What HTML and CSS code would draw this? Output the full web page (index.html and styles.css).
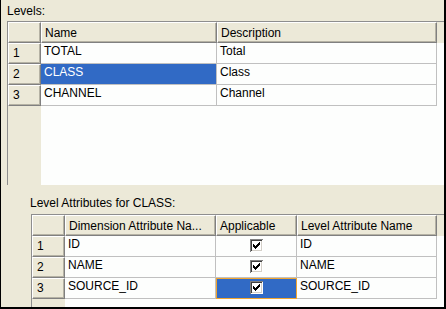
FILE: index.html
```html
<!DOCTYPE html>
<html lang="en">
<head>
    <meta charset="UTF-8">
    <title>Levels</title>
    <link rel="stylesheet" href="styles.css">
</head>
<body>

    <div class="frame">
        <div class="caption">Levels:</div>

        <div class="pane pane-levels">
            <div class="row levels head">
                <div class="hcell corner"></div>
                <div class="hcell">Name</div>
                <div class="hcell">Description</div>
                <div class="filler"></div>
            </div>
            <div class="row levels">
                <div class="rhead">1</div>
                <div class="cell">TOTAL</div>
                <div class="cell">Total</div>
            </div>
            <div class="row levels">
                <div class="rhead">2</div>
                <div class="cell selected">CLASS</div>
                <div class="cell">Class</div>
            </div>
            <div class="row levels">
                <div class="rhead">3</div>
                <div class="cell">CHANNEL</div>
                <div class="cell">Channel</div>
            </div>
        </div>

        <div class="caption caption-attrs">Level Attributes for CLASS:</div>

        <div class="pane pane-attrs">
            <div class="row attrs head">
                <div class="hcell corner"></div>
                <div class="hcell">Dimension Attribute Na...</div>
                <div class="hcell">Applicable</div>
                <div class="hcell">Level Attribute Name</div>
                <div class="filler"></div>
            </div>
            <div class="row attrs">
                <div class="rhead">1</div>
                <div class="cell">ID</div>
                <div class="cell check">
                    <svg class="box" width="13" height="13" viewBox="0 0 13 13" shape-rendering="crispEdges">
                        <rect width="13" height="13" fill="#fff"/>
                        <path d="M0.5 12.5V0.5H12.5" stroke="#808080" fill="none"/>
                        <path d="M1.5 11.5V1.5H11.5" stroke="#404040" fill="none"/>
                        <path d="M1.5 11.5H11.5V1.5" stroke="#d4d0c8" fill="none"/>
                        <path d="M3 5h1v3h-1zM4 6h1v3h-1zM5 7h1v3h-1zM6 6h1v3h-1zM7 5h1v3h-1zM8 4h1v3h-1zM9 3h1v3h-1z" fill="#000"/>
                    </svg>
                </div>
                <div class="cell">ID</div>
            </div>
            <div class="row attrs">
                <div class="rhead">2</div>
                <div class="cell">NAME</div>
                <div class="cell check">
                    <svg class="box" width="13" height="13" viewBox="0 0 13 13" shape-rendering="crispEdges">
                        <rect width="13" height="13" fill="#fff"/>
                        <path d="M0.5 12.5V0.5H12.5" stroke="#808080" fill="none"/>
                        <path d="M1.5 11.5V1.5H11.5" stroke="#404040" fill="none"/>
                        <path d="M1.5 11.5H11.5V1.5" stroke="#d4d0c8" fill="none"/>
                        <path d="M3 5h1v3h-1zM4 6h1v3h-1zM5 7h1v3h-1zM6 6h1v3h-1zM7 5h1v3h-1zM8 4h1v3h-1zM9 3h1v3h-1z" fill="#000"/>
                    </svg>
                </div>
                <div class="cell">NAME</div>
            </div>
            <div class="row attrs">
                <div class="rhead">3</div>
                <div class="cell">SOURCE_ID</div>
                <div class="cell check selected focus">
                    <svg class="box" width="13" height="13" viewBox="0 0 13 13" shape-rendering="crispEdges">
                        <rect width="13" height="13" fill="#fff"/>
                        <path d="M0.5 12.5V0.5H12.5" stroke="#808080" fill="none"/>
                        <path d="M1.5 11.5V1.5H11.5" stroke="#404040" fill="none"/>
                        <path d="M1.5 11.5H11.5V1.5" stroke="#d4d0c8" fill="none"/>
                        <path d="M3 5h1v3h-1zM4 6h1v3h-1zM5 7h1v3h-1zM6 6h1v3h-1zM7 5h1v3h-1zM8 4h1v3h-1zM9 3h1v3h-1z" fill="#000"/>
                    </svg>
                </div>
                <div class="cell">SOURCE_ID</div>
            </div>
        </div>
    </div>

</body>
</html>
```

FILE: styles.css
```css
body {
    margin: 0;
    font-family: "Liberation Sans", Arial, sans-serif;
    font-size: 12px;
    color: #000;
    background-color: #ece9d8;
}

.frame {
    width: 446px;
    height: 309px;
    box-sizing: border-box;
    border-left: 1px solid #000;
    border-right: 2px solid #000;
    border-bottom: 2px solid #000;
    background-color: #ece9d8;
    display: flex;
    flex-direction: column;
}

.caption {
    padding: 4px 0 3px 6px;
    line-height: 14px;
}

.caption-attrs {
    padding: 11px 0 4px 29px;
}

.pane {
    margin-left: 6px;
    border-top: 1px solid #8e8e8e;
    border-left: 1px solid #8e8e8e;
    background: linear-gradient(to right, #ece9d8 33px, #fdfefd 33px);
}

.pane-levels {
    height: 163px;
}

.pane-attrs {
    margin-left: 30px;
    flex: 1;
}

.row {
    display: grid;
    height: 21px;
}

.levels {
    grid-template-columns: 33px 176px 220px;
}

.attrs {
    grid-template-columns: 33px 151px 81px 140px;
}

.levels.head {
    grid-template-columns: 33px 176px 220px 1fr;
}

.attrs.head {
    grid-template-columns: 33px 151px 81px 140px 1fr;
}

.hcell,
.rhead {
    box-sizing: border-box;
    background-color: #ece9d8;
    border-top: 1px solid #fff;
    border-left: 1px solid #fff;
    border-right: 1px solid #808080;
    border-bottom: 1px solid #808080;
    box-shadow: inset -1px -1px 0 #b5b2a4;
    white-space: nowrap;
    overflow: hidden;
}

.hcell {
    padding: 2px 0 0 3px;
    line-height: 17px;
}

.rhead {
    padding: 1px 0 0 4px;
    line-height: 17px;
}

.filler {
    background-color: #ece9d8;
}

.cell {
    box-sizing: border-box;
    background-color: #fdfefd;
    border-right: 1px solid #c0c0c0;
    border-bottom: 1px solid #c0c0c0;
    padding: 0 0 3px 3px;
    line-height: 17px;
    white-space: nowrap;
    overflow: hidden;
}

.cell.selected {
    background-color: #316ac5;
    color: #fff;
}

.cell.focus {
    outline: 1px solid #f0a531;
    outline-offset: -1px;
}

.check {
    display: flex;
    justify-content: center;
    padding: 3px 0 0 0;
}

.box {
    display: block;
}
```
